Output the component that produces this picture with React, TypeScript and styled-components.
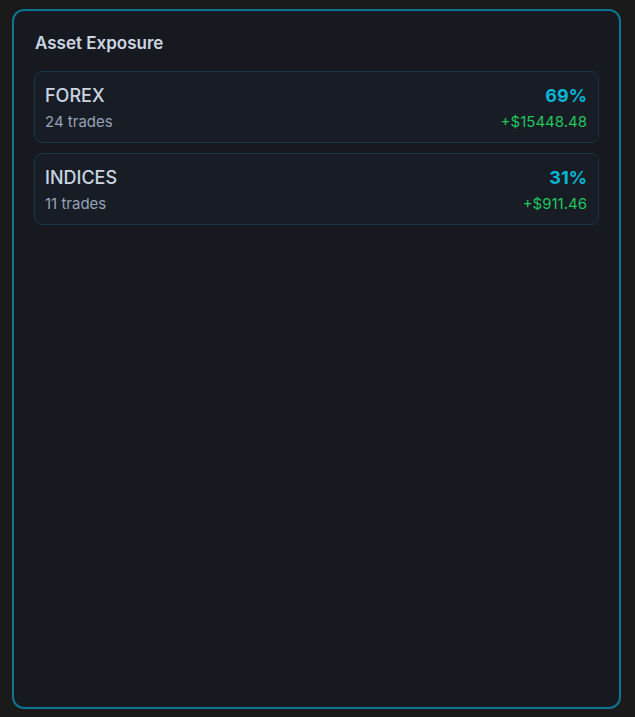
import React from "react";
import styled, { createGlobalStyle } from "styled-components";

const Global = createGlobalStyle`
  html, body { margin: 0; padding: 0; background: #1a1a1a; }
  body { font-family: Inter, "Noto Sans", sans-serif; }
`;

const Page = styled.div`
  padding: 9px 14px 8px 12px;
  box-sizing: border-box;
  height: 717px;
`;

const Card = styled.section`
  box-sizing: border-box;
  height: 100%;
  border: 2px solid #0e7490;
  border-radius: 12px;
  background: #161920;
  padding: 20px 20px;
  display: flex;
  flex-direction: column;
`;

const Title = styled.h2`
  margin: 0 0 16px;
  padding-left: 1px;
  font-size: 17px;
  line-height: 24px;
  font-weight: 600;
  color: #cbd5e1;
`;

const List = styled.div`
  display: flex;
  flex-direction: column;
  gap: 10px;
`;

const Row = styled.div`
  display: flex;
  justify-content: space-between;
  align-items: stretch;
  border: 1px solid #183544;
  border-radius: 8px;
  background: #181c25;
  padding: 12px 11px 10px 10px;
`;

const Col = styled.div<{ $end?: boolean }>`
  display: flex;
  flex-direction: column;
  gap: 4px;
  align-items: ${(p) => (p.$end ? "flex-end" : "flex-start")};
`;

const Name = styled.div`
  font-size: 18px;
  line-height: 24px;
  font-weight: 500;
  color: #cbd5e1;
`;

const Sub = styled.div`
  font-size: 15px;
  line-height: 20px;
  color: #94a3b8;
`;

const Pct = styled.div`
  font-size: 18px;
  line-height: 24px;
  font-weight: 700;
  color: #06b6d4;
`;

const Pnl = styled.div`
  font-size: 15px;
  line-height: 20px;
  color: #22c55e;
`;

const data = [
  { name: "FOREX", trades: 24, pct: 69, pnl: "+$15448.48" },
  { name: "INDICES", trades: 11, pct: 31, pnl: "+$911.46" },
];

export default function App() {
  return (
    <>
      <Global />
      <Page>
        <Card>
          <Title>Asset Exposure</Title>
          <List>
            {data.map((d) => (
              <Row key={d.name}>
                <Col>
                  <Name>{d.name}</Name>
                  <Sub>{d.trades} trades</Sub>
                </Col>
                <Col $end>
                  <Pct>{d.pct}%</Pct>
                  <Pnl>{d.pnl}</Pnl>
                </Col>
              </Row>
            ))}
          </List>
        </Card>
      </Page>
    </>
  );
}
